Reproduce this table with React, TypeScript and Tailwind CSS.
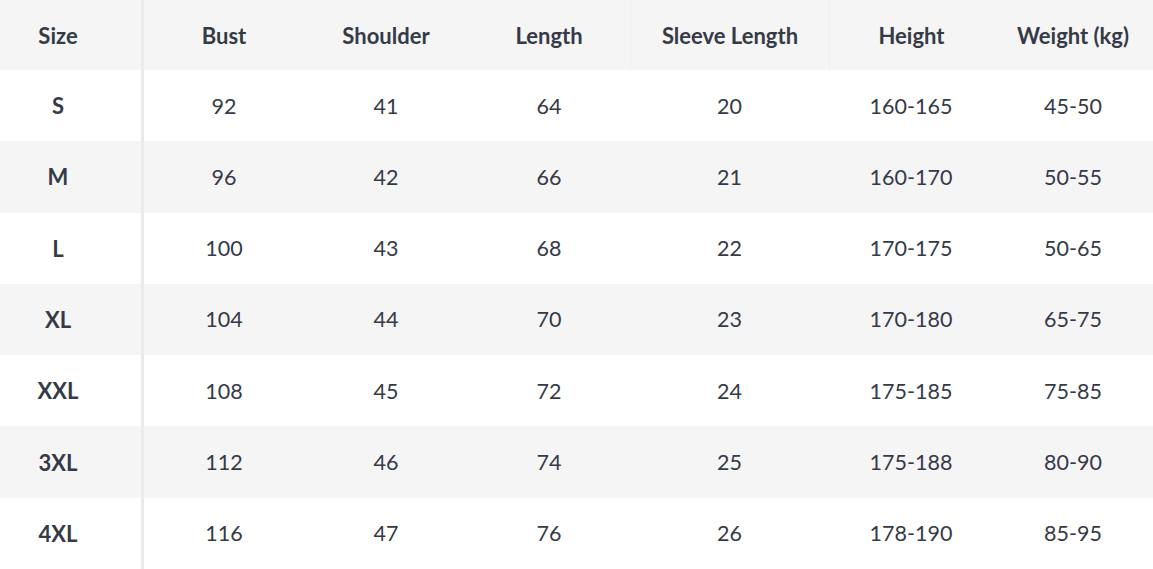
import React from 'react'

interface SizeRow {
  size: string;
  bust: number;
  shoulder: number;
  length: number;
  sleeve: number;
  height: string;
  weight: string;
}

const rows: SizeRow[] = [
  { size: "S", bust: 92, shoulder: 41, length: 64, sleeve: 20, height: "160-165", weight: "45-50" },
  { size: "M", bust: 96, shoulder: 42, length: 66, sleeve: 21, height: "160-170", weight: "50-55" },
  { size: "L", bust: 100, shoulder: 43, length: 68, sleeve: 22, height: "170-175", weight: "50-65" },
  { size: "XL", bust: 104, shoulder: 44, length: 70, sleeve: 23, height: "170-180", weight: "65-75" },
  { size: "XXL", bust: 108, shoulder: 45, length: 72, sleeve: 24, height: "175-185", weight: "75-85" },
  { size: "3XL", bust: 112, shoulder: 46, length: 74, sleeve: 25, height: "175-188", weight: "80-90" },
  { size: "4XL", bust: 116, shoulder: 47, length: 76, sleeve: 26, height: "178-190", weight: "85-95" },
]

const headers = ["Bust", "Shoulder", "Length", "Sleeve Length", "Height", "Weight (kg)"]

// column tracks measured from the screenshot
const cols = "grid grid-cols-[144px_160px_164px_162px_199px_164px_160px]"

const SizeChart = () => {
  return (
    <div className="w-full h-[569px] overflow-hidden bg-white text-[#353a47]" style={{ fontFamily: 'Lato, "Noto Sans", sans-serif' }}>
      <div className={`${cols} h-[70px] bg-[#f5f5f5] items-center text-[22px] font-bold`}>
        <div className="h-full flex items-center justify-center pr-[25px] border-r-[3px] border-[#ebebeb]">Size</div>
        {headers.map((h, i) => (
          <div
            key={h}
            className={`h-full flex items-center justify-center ${i === 3 || i === 4 ? 'border-l border-[#efefef]' : ''}`}
          >
            {h}
          </div>
        ))}
      </div>

      {rows.map((row, index) => (
        <div key={row.size} className={`${cols} h-[71.3px] text-[21.5px] ${index % 2 === 1 ? 'bg-[#f5f5f5]' : 'bg-white'}`}>
          <div className="h-full flex items-center justify-center pr-[25px] border-r-[3px] border-[#ebebeb] font-bold text-[22px]">{row.size}</div>
          <div className="flex items-center justify-center">{row.bust}</div>
          <div className="flex items-center justify-center">{row.shoulder}</div>
          <div className="flex items-center justify-center">{row.length}</div>
          <div className="flex items-center justify-center">{row.sleeve}</div>
          <div className="flex items-center justify-center">{row.height}</div>
          <div className="flex items-center justify-center">{row.weight}</div>
        </div>
      ))}
    </div>
  )
}

export default SizeChart
